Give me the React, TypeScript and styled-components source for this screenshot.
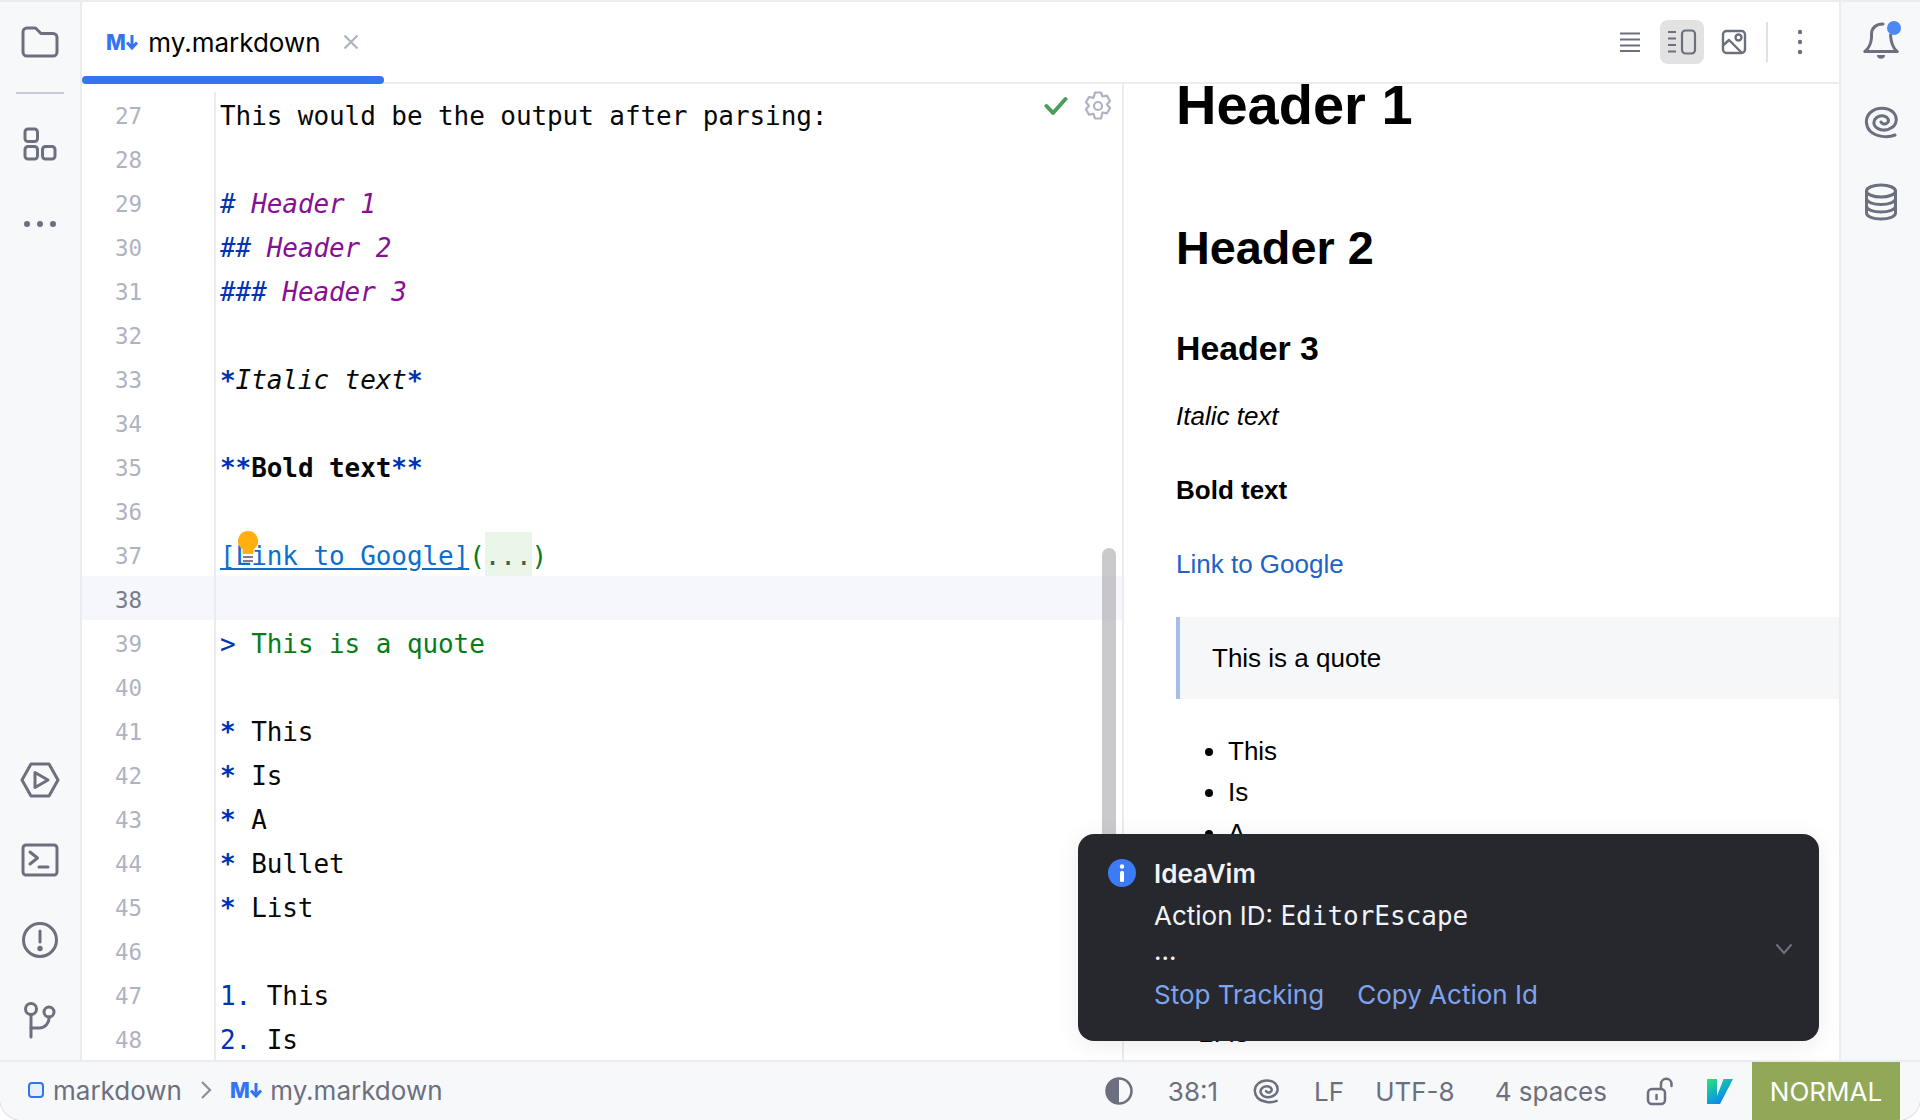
import React from "react";
import styled, { createGlobalStyle } from "styled-components";

const ui = `Inter, "Liberation Sans", sans-serif`;
const mono = `"DejaVu Sans Mono", "Liberation Mono", monospace`;
const iconGrey = "#6c707e";
const line = "#ebecf0";

const GlobalStyle = createGlobalStyle`
  html, body { margin: 0; padding: 0; background: #fff; overflow: hidden; }
  * { box-sizing: border-box; }
`;

const Window = styled.div`
  position: relative;
  display: flex;
  flex-direction: column;
  width: 1920px;
  height: 1120px;
  border-top: 2px solid ${line};
  border-radius: 0 0 22px 22px;
  box-shadow: 0 0 0 1px #d8dae0;
  overflow: hidden;
  background: #fff;
  font-family: ${ui};
`;

const Main = styled.div`
  display: flex;
  height: 1058px;
`;

const SideBar = styled.aside<{ $side: "left" | "right" }>`
  display: flex;
  flex-direction: column;
  justify-content: space-between;
  flex: none;
  width: ${(p) => (p.$side === "left" ? 82 : 81)}px;
  background: #f7f8fa;
  ${(p) => (p.$side === "left" ? "border-right" : "border-left")}: 2px solid ${line};
`;

const ToolSlot = styled.div`
  display: flex;
  align-items: center;
  justify-content: center;
  height: 80px;
`;

const ToolSep = styled.div`
  width: 48px;
  height: 2px;
  margin: 10px auto;
  background: #c9ccd6;
`;

const Center = styled.div`
  display: flex;
  flex-direction: column;
  flex: 1;
  min-width: 0;
`;

const TabBar = styled.div`
  display: flex;
  align-items: center;
  justify-content: space-between;
  flex: none;
  height: 82px;
  padding-right: 17px;
  border-bottom: 2px solid ${line};
`;

const Tab = styled.div`
  position: relative;
  display: flex;
  align-items: center;
  gap: 9px;
  width: 302px;
  height: 80px;
  padding: 0 0 0 24px;
  font-size: 26px;
  color: #000;

  &::after {
    content: "";
    position: absolute;
    left: 0;
    right: 0;
    bottom: -2px;
    height: 8px;
    border-radius: 4px;
    background: #3574f0;
  }
`;

const MdBadge = styled.span<{ $size?: number }>`
  display: inline-block;
  font-family: ${ui};
  font-weight: 800;
  font-size: ${(p) => p.$size ?? 21}px;
  letter-spacing: -0.5px;
  color: #3574f0;
`;

const TabClose = styled.span`
  display: flex;
  margin-left: 13px;
`;

const Actions = styled.div`
  display: flex;
  align-items: center;
  gap: 8px;
`;

const ActionButton = styled.div<{ $active?: boolean }>`
  display: flex;
  align-items: center;
  justify-content: center;
  width: 44px;
  height: 44px;
  border-radius: 8px;
  background: ${(p) => (p.$active ? "#e2e2e3" : "transparent")};
`;

const ActionSep = styled.div`
  width: 2px;
  height: 40px;
  margin: 0 2px;
  background: #dfe1e5;
`;

const Split = styled.div`
  display: flex;
  flex: 1;
  min-height: 0;
`;

const Editor = styled.div`
  position: relative;
  flex: none;
  width: 1042px;
  padding-top: 8px;
  overflow: hidden;
  border-right: 2px solid ${line};
`;

const Row = styled.div<{ $current?: boolean }>`
  display: flex;
  height: 44px;
  background: ${(p) => (p.$current ? "#f6f7fd" : "transparent")};
`;

const LineNo = styled.div<{ $current?: boolean }>`
  flex: none;
  width: 134px;
  padding-right: 72px;
  border-right: 2px solid ${line};
  text-align: right;
  font-family: ${mono};
  font-size: 22.5px;
  line-height: 48px;
  color: ${(p) => (p.$current ? "#787c8c" : "#aeb3c2")};
`;

const Code = styled.div`
  padding-left: 4px;
  font-family: ${mono};
  font-size: 26px;
  letter-spacing: -0.08px;
  line-height: 48px;
  white-space: pre;
  color: #080808;
`;

const Mark = styled.span`
  color: #0033b3;
`;

const Star = styled.span`
  font-weight: 700;
  color: #0033b3;
`;

const Heading = styled.span`
  font-style: italic;
  color: #871094;
`;

const Italic = styled.span`
  font-style: italic;
`;

const Bold = styled.span`
  font-weight: 700;
`;

const LinkText = styled.span`
  color: #0b6fcf;
  text-decoration: underline;
  text-underline-offset: 3px;
`;

const Green = styled.span`
  color: #067d17;
`;

const Folded = styled.span`
  display: inline-block;
  height: 44px;
  background: #e9f5e6;
  color: #4a5a4a;
`;

const Inspection = styled.div`
  position: absolute;
  top: 7px;
  right: 10px;
  display: flex;
  align-items: center;
  gap: 16px;
`;

const Scrollbar = styled.div`
  position: absolute;
  top: 464px;
  right: 6px;
  width: 14px;
  height: 400px;
  border-radius: 7px 7px 0 0;
  background: rgba(170, 170, 172, 0.62);
`;

const Bulb = styled.div`
  position: absolute;
  left: 155px;
  top: 446px;
  display: flex;
`;

const Preview = styled.div`
  flex: 1;
  min-width: 0;
  padding-left: 52px;
  overflow: hidden;
  font-family: "Liberation Sans", Arial, sans-serif;
  font-size: 26px;
  line-height: 36px;
  color: #000;
`;

const H1 = styled.h1`
  margin: -14px 0 0;
  font-size: 56px;
  line-height: 70px;
`;

const H2 = styled.h2`
  margin: 79px 0 0;
  font-size: 46.8px;
  line-height: 58px;
`;

const H3 = styled.h3`
  margin: 50px 0 0;
  font-size: 33.8px;
  line-height: 42px;
`;

const Para = styled.p<{ $top: number }>`
  margin: ${(p) => p.$top}px 0 0;
`;

const DocLink = styled.span`
  color: #2162c9;
`;

const Quote = styled.blockquote`
  display: flex;
  align-items: center;
  height: 82px;
  margin: 35px 0 0;
  padding-left: 32px;
  border-left: 4px solid #a6bde6;
  background: #f6f7f9;
`;

const BulletList = styled.ul`
  margin: 32px 0 0;
  padding-left: 52px;
  line-height: 41px;
`;

const NumberList = styled.ol`
  margin: 36px 0 0;
  padding-left: 52px;
  line-height: 41px;
`;

const StatusBar = styled.footer`
  display: flex;
  align-items: center;
  justify-content: space-between;
  flex: none;
  height: 60px;
  padding-left: 28px;
  border-top: 2px solid ${line};
  background: #f7f8fa;
  font-size: 26px;
  color: ${iconGrey};
`;

const Crumbs = styled.div`
  display: flex;
  align-items: center;
  margin-bottom: 2px;
`;

const ModuleDot = styled.span`
  width: 16px;
  height: 16px;
  margin-right: 9px;
  border: 2.5px solid #3574f0;
  border-radius: 4px;
  background: #e7effd;
`;

const CrumbArrow = styled.span`
  display: flex;
  margin: 0 18px;
`;

const StatusItems = styled.div`
  display: flex;
  align-items: center;
  gap: 35px;
  height: 100%;
  padding-right: 20px;
`;

const StatusText = styled.span<{ $extra?: number }>`
  margin-left: ${(p) => p.$extra ?? 0}px;
`;

const StatusIcon = styled.span<{ $extra?: number }>`
  display: flex;
  margin-left: ${(p) => p.$extra ?? 0}px;
`;

const ModeBadge = styled.div`
  display: flex;
  align-items: center;
  justify-content: center;
  width: 148px;
  height: 100%;
  margin-left: -17px;
  background: #91a858;
  color: #fff;
`;

const Notification = styled.div`
  position: absolute;
  left: 1078px;
  top: 832px;
  display: grid;
  grid-template-columns: 28px 1fr;
  column-gap: 18px;
  width: 741px;
  height: 207px;
  padding: 21px 30px;
  border-radius: 16px;
  background: #27282e;
  box-shadow: 0 4px 24px rgba(0, 0, 0, 0.08);
  color: #f2f3f5;
  font-size: 26px;
`;

const InfoDot = styled.div`
  display: flex;
  align-items: center;
  justify-content: center;
  width: 28px;
  height: 28px;
  margin-top: 4px;
  border-radius: 50%;
  background: #3b7cf5;
`;

const NoteTitle = styled.div`
  font-weight: 600;
  line-height: 38px;
`;

const NoteLine = styled.div`
  margin-top: 4px;
  line-height: 38px;
`;

const MonoWord = styled.span`
  font-family: ${mono};
`;

const NoteDots = styled.div`
  line-height: 32px;
  height: 38px;
`;

const NoteLinks = styled.div`
  display: flex;
  gap: 33px;
  margin-top: 3px;
  line-height: 38px;
  color: #7fa4ee;
`;

const NoteChevron = styled.div`
  position: absolute;
  right: 26px;
  top: 109px;
  display: flex;
`;

const stroke = {
  fill: "none",
  stroke: iconGrey,
  strokeWidth: 3,
  strokeLinecap: "round" as const,
  strokeLinejoin: "round" as const,
};

const FolderIcon = () => (
  <svg width="38" height="32" viewBox="0 0 38 32" {...stroke}>
    <path d="M2 6a4 4 0 0 1 4-4h8.5l5.5 5.5h12a4 4 0 0 1 4 4V26a4 4 0 0 1-4 4H6a4 4 0 0 1-4-4z" />
  </svg>
);

const StructureIcon = () => (
  <svg width="34" height="34" viewBox="0 0 34 34" {...stroke}>
    <rect x="2" y="2" width="12.5" height="12.5" rx="3" />
    <rect x="2" y="19.5" width="12.5" height="12.5" rx="3" />
    <rect x="19.5" y="19.5" width="12.5" height="12.5" rx="3" />
  </svg>
);

const DotsIcon = () => (
  <svg width="34" height="8" viewBox="0 0 34 8" fill={iconGrey}>
    <circle cx="4" cy="4" r="3" />
    <circle cx="17" cy="4" r="3" />
    <circle cx="30" cy="4" r="3" />
  </svg>
);

const RunIcon = () => (
  <svg width="40" height="36" viewBox="0 0 40 36" {...stroke}>
    <path d="M11 2h18l9 16-9 16H11L2 18z" />
    <path d="M15 10.5l13 7.5-13 7.5z" />
  </svg>
);

const TerminalIcon = () => (
  <svg width="38" height="34" viewBox="0 0 38 34" {...stroke}>
    <rect x="2" y="2" width="34" height="30" rx="3" />
    <path d="M9 9l7.5 6L9 21" />
    <path d="M18 24h9" />
  </svg>
);

const ProblemsIcon = () => (
  <svg width="38" height="38" viewBox="0 0 38 38" {...stroke}>
    <circle cx="19" cy="19" r="16.5" />
    <path d="M19 10v11" />
    <circle cx="19" cy="27.5" r="1.2" fill={iconGrey} />
  </svg>
);

const GitIcon = () => (
  <svg width="34" height="38" viewBox="0 0 34 38" {...stroke}>
    <circle cx="8" cy="8" r="5.5" />
    <circle cx="26" cy="11" r="5" />
    <path d="M8 14v22" />
    <path d="M8 27h8a10 10 0 0 0 10-11" />
  </svg>
);

const BellIcon = () => (
  <svg width="40" height="42" viewBox="0 0 40 42">
    <g {...stroke}>
      <path d="M4 30.500C8 27 10 23 10.500 17v-4C10.500 7 15 3 22 3" />
      <path d="M29.500 14c.5 8 2.500 13 6.500 16.500" />
      <path d="M4 30.500h32" />
    </g>
    <path d="M16 34h8a4 3.800 0 0 1-8 0z" fill={iconGrey} />
    <circle cx="33" cy="7" r="7" fill="#4d88f7" />
  </svg>
);

const SpiralIcon = ({ size = 34, width = 3 }: { size?: number; width?: number }) => (
  <svg width={size} height={size} viewBox="0 0 34 34" {...stroke} strokeWidth={width * (34 / size)}>
    <path d="M31 30C24 33 12 32 6 26 1 20 1 12 7 7 13 2 23 2 29 7c5 5 4 13-2 16-6 4-15 2-17-4-1-5 4-9 10-8 4 1 6 5 3 7-2 2-5 1-6-1" />
  </svg>
);

const DatabaseIcon = () => (
  <svg width="34" height="38" viewBox="0 0 34 38" {...stroke}>
    <ellipse cx="17" cy="8" rx="14.500" ry="6" />
    <path d="M2.500 8v22c0 3.500 6.500 6 14.500 6s14.500-2.500 14.500-6V8" />
    <path d="M2.500 15.500c0 3.500 6.500 6 14.500 6s14.500-2.500 14.500-6" />
    <path d="M2.500 23c0 3.500 6.500 6 14.500 6s14.500-2.500 14.500-6" />
  </svg>
);

const EditorOnlyIcon = () => (
  <svg width="22" height="22" viewBox="0 0 22 22" {...stroke} strokeWidth={2} strokeLinecap="butt">
    <path d="M1 2.500h20M1 8.500h20M1 14.500h20M1 20h20" />
  </svg>
);

const SplitIcon = () => (
  <svg width="30" height="26" viewBox="0 0 30 26" {...stroke} strokeWidth={2.2} strokeLinecap="butt">
    <path d="M1 3h8M1 9.500h8M1 16h8M1 22.500h8" />
    <rect x="15" y="1.500" width="13" height="23" rx="3.500" />
  </svg>
);

const PreviewIcon = () => (
  <svg width="26" height="26" viewBox="0 0 26 26" {...stroke} strokeWidth={2.4}>
    <rect x="2" y="2" width="22" height="22" rx="3.500" />
    <path d="M2.500 16L8 11l12.500 12.500" />
    <circle cx="17.500" cy="8.500" r="3" />
  </svg>
);

const KebabIcon = () => (
  <svg width="6" height="26" viewBox="0 0 6 26" fill={iconGrey}>
    <circle cx="3" cy="3" r="2.200" />
    <circle cx="3" cy="13" r="2.200" />
    <circle cx="3" cy="23" r="2.200" />
  </svg>
);

const CloseIcon = () => (
  <svg width="16" height="16" viewBox="0 0 16 16" fill="none" stroke="#aeb3c2" strokeWidth="2.200">
    <path d="M1.500 1.500l13 13M14.500 1.500l-13 13" />
  </svg>
);

const CheckIcon = () => (
  <svg width="24" height="20" viewBox="0 0 24 20" fill="none" stroke="#4a9e5c" strokeWidth="4" strokeLinecap="round" strokeLinejoin="round">
    <path d="M2.500 10l6.500 7L21.500 3" />
  </svg>
);

const GearIcon = () => (
  <svg width="28" height="30" viewBox="0 0 28 30" fill="none" stroke="#aeb3c2" strokeWidth="2.200" strokeLinejoin="round">
    <path d="M11 2h6l1.500 4 4.500-.8 3 5.300-3 3.500 3 3.500-3 5.300-4.500-.8L17 28h-6l-1.500-4.700-4.500.8-3-5.300L5 15.300 2 11.800l3-5.300 4.500.8z" transform="translate(0 -.5)" />
    <circle cx="14" cy="15" r="4" />
  </svg>
);

const BulbIcon = () => (
  <svg width="22" height="34" viewBox="0 0 22 34">
    <path d="M11 1a10 10 0 0 1 5.500 18.300V24h-11v-4.700A10 10 0 0 1 11 1z" fill="#ffaf0f" />
    <path d="M6 27h10M6 31h10" stroke="#7b7e8a" strokeWidth="2" />
  </svg>
);

const MdArrow = () => (
  <svg width="14" height="16" viewBox="0 0 14 16" fill="none" stroke="#3574f0" strokeWidth="3">
    <path d="M7 1v13M2 8.500l5 5.500 5-5.500" />
  </svg>
);

const MdIcon = ({ size }: { size?: number }) => (
  <MdBadge $size={size}>
    M<MdArrow />
  </MdBadge>
);

const ChevronRight = () => (
  <svg width="12" height="20" viewBox="0 0 12 20" fill="none" stroke="#8a8e9c" strokeWidth="2.200">
    <path d="M2 2l8 8-8 8" />
  </svg>
);

const ContrastIcon = () => (
  <svg width="28" height="28" viewBox="0 0 28 28">
    <circle cx="14" cy="14" r="12.500" fill="none" stroke={iconGrey} strokeWidth="2.500" />
    <path d="M14 1.500a12.500 12.500 0 0 0 0 25z" fill={iconGrey} />
  </svg>
);

const LockIcon = () => (
  <svg width="28" height="30" viewBox="0 0 28 30" fill="none" stroke={iconGrey} strokeWidth="2.500" strokeLinecap="round">
    <rect x="2" y="13" width="17" height="15" rx="4" />
    <path d="M10.500 19v4" />
    <path d="M15 13V8a5 5 0 0 1 10.500 0v2" />
  </svg>
);

const VimLogo = () => (
  <svg width="28" height="28" viewBox="0 0 28 28">
    <defs>
      <linearGradient id="vim" x1="0" y1="0" x2="0.7" y2="1">
        <stop offset="0" stopColor="#2ce56f" />
        <stop offset="0.5" stopColor="#12b0c4" />
        <stop offset="1" stopColor="#087cfa" />
      </linearGradient>
    </defs>
    <path d="M1 2h10v17L17.500 2H27L14 27H1z" fill="url(#vim)" />
  </svg>
);

const InfoGlyph = () => (
  <svg width="6" height="18" viewBox="0 0 6 18" fill="#fff">
    <circle cx="3" cy="2.500" r="2.200" />
    <rect x="1" y="7" width="4" height="11" rx="1.500" />
  </svg>
);

const ChevronDown = () => (
  <svg width="18" height="12" viewBox="0 0 18 12" fill="none" stroke="#6f7280" strokeWidth="2">
    <path d="M1.500 1.500L9 10l7.500-8.500" />
  </svg>
);

const codeLines: React.ReactNode[] = [
  "This would be the output after parsing:",
  "",
  <><Mark><Italic>#</Italic></Mark> <Heading>Header 1</Heading></>,
  <><Mark><Italic>##</Italic></Mark> <Heading>Header 2</Heading></>,
  <><Mark><Italic>###</Italic></Mark> <Heading>Header 3</Heading></>,
  "",
  <Italic><Star>*</Star>Italic text<Star>*</Star></Italic>,
  "",
  <Bold><Mark>**</Mark>Bold text<Mark>**</Mark></Bold>,
  "",
  <><LinkText>[Link to Google]</LinkText><Green>(</Green><Folded>...</Folded><Green>)</Green></>,
  "",
  <><Mark>&gt;</Mark> <Green>This is a quote</Green></>,
  "",
  <><Star>*</Star> This</>,
  <><Star>*</Star> Is</>,
  <><Star>*</Star> A</>,
  <><Star>*</Star> Bullet</>,
  <><Star>*</Star> List</>,
  "",
  <><Mark>1.</Mark> This</>,
  <><Mark>2.</Mark> Is</>,
];

export default function App() {
  return (
    <>
      <GlobalStyle />
      <Window>
        <Main>
          <SideBar $side="left">
            <div>
              <ToolSlot><FolderIcon /></ToolSlot>
              <ToolSep />
              <ToolSlot><StructureIcon /></ToolSlot>
              <ToolSlot><DotsIcon /></ToolSlot>
            </div>
            <div>
              <ToolSlot><RunIcon /></ToolSlot>
              <ToolSlot><TerminalIcon /></ToolSlot>
              <ToolSlot><ProblemsIcon /></ToolSlot>
              <ToolSlot><GitIcon /></ToolSlot>
            </div>
          </SideBar>

          <Center>
            <TabBar>
              <Tab>
                <MdIcon />
                my.markdown
                <TabClose><CloseIcon /></TabClose>
              </Tab>
              <Actions>
                <ActionButton><EditorOnlyIcon /></ActionButton>
                <ActionButton $active><SplitIcon /></ActionButton>
                <ActionButton><PreviewIcon /></ActionButton>
                <ActionSep />
                <ActionButton><KebabIcon /></ActionButton>
              </Actions>
            </TabBar>

            <Split>
              <Editor>
                {codeLines.map((content, i) => {
                  const no = i + 27;
                  return (
                    <Row key={no} $current={no === 38}>
                      <LineNo $current={no === 38}>{no}</LineNo>
                      <Code>{content}</Code>
                    </Row>
                  );
                })}
                <Inspection>
                  <CheckIcon />
                  <GearIcon />
                </Inspection>
                <Scrollbar />
                <Bulb><BulbIcon /></Bulb>
              </Editor>

              <Preview>
                <H1>Header 1</H1>
                <H2>Header 2</H2>
                <H3>Header 3</H3>
                <Para $top={29}><em>Italic text</em></Para>
                <Para $top={38}><strong>Bold text</strong></Para>
                <Para $top={38}><DocLink>Link to Google</DocLink></Para>
                <Quote>This is a quote</Quote>
                <BulletList>
                  <li>This</li>
                  <li>Is</li>
                  <li>A</li>
                  <li>Bullet</li>
                  <li>List</li>
                </BulletList>
                <NumberList>
                  <li>This</li>
                  <li>Is</li>
                </NumberList>
              </Preview>
            </Split>
          </Center>

          <SideBar $side="right">
            <div>
              <ToolSlot><BellIcon /></ToolSlot>
              <ToolSlot><SpiralIcon /></ToolSlot>
              <ToolSlot><DatabaseIcon /></ToolSlot>
            </div>
          </SideBar>
        </Main>

        <StatusBar>
          <Crumbs>
            <ModuleDot />
            markdown
            <CrumbArrow><ChevronRight /></CrumbArrow>
            <MdIcon />
            <StatusText $extra={7}>my.markdown</StatusText>
          </Crumbs>
          <StatusItems>
            <ContrastIcon />
            <StatusText>38:1</StatusText>
            <SpiralIcon size={26} width={2.5} />
            <StatusText>LF</StatusText>
            <StatusText $extra={-4}>UTF-8</StatusText>
            <StatusText $extra={5}>4 spaces</StatusText>
            <StatusIcon $extra={4}><LockIcon /></StatusIcon>
            <StatusIcon $extra={-3}><VimLogo /></StatusIcon>
            <ModeBadge>NORMAL</ModeBadge>
          </StatusItems>
        </StatusBar>

        <Notification>
          <InfoDot><InfoGlyph /></InfoDot>
          <div>
            <NoteTitle>IdeaVim</NoteTitle>
            <NoteLine>Action ID: <MonoWord>EditorEscape</MonoWord></NoteLine>
            <NoteDots>...</NoteDots>
            <NoteLinks>
              <span>Stop Tracking</span>
              <span>Copy Action Id</span>
            </NoteLinks>
          </div>
          <NoteChevron><ChevronDown /></NoteChevron>
        </Notification>
      </Window>
    </>
  );
}
